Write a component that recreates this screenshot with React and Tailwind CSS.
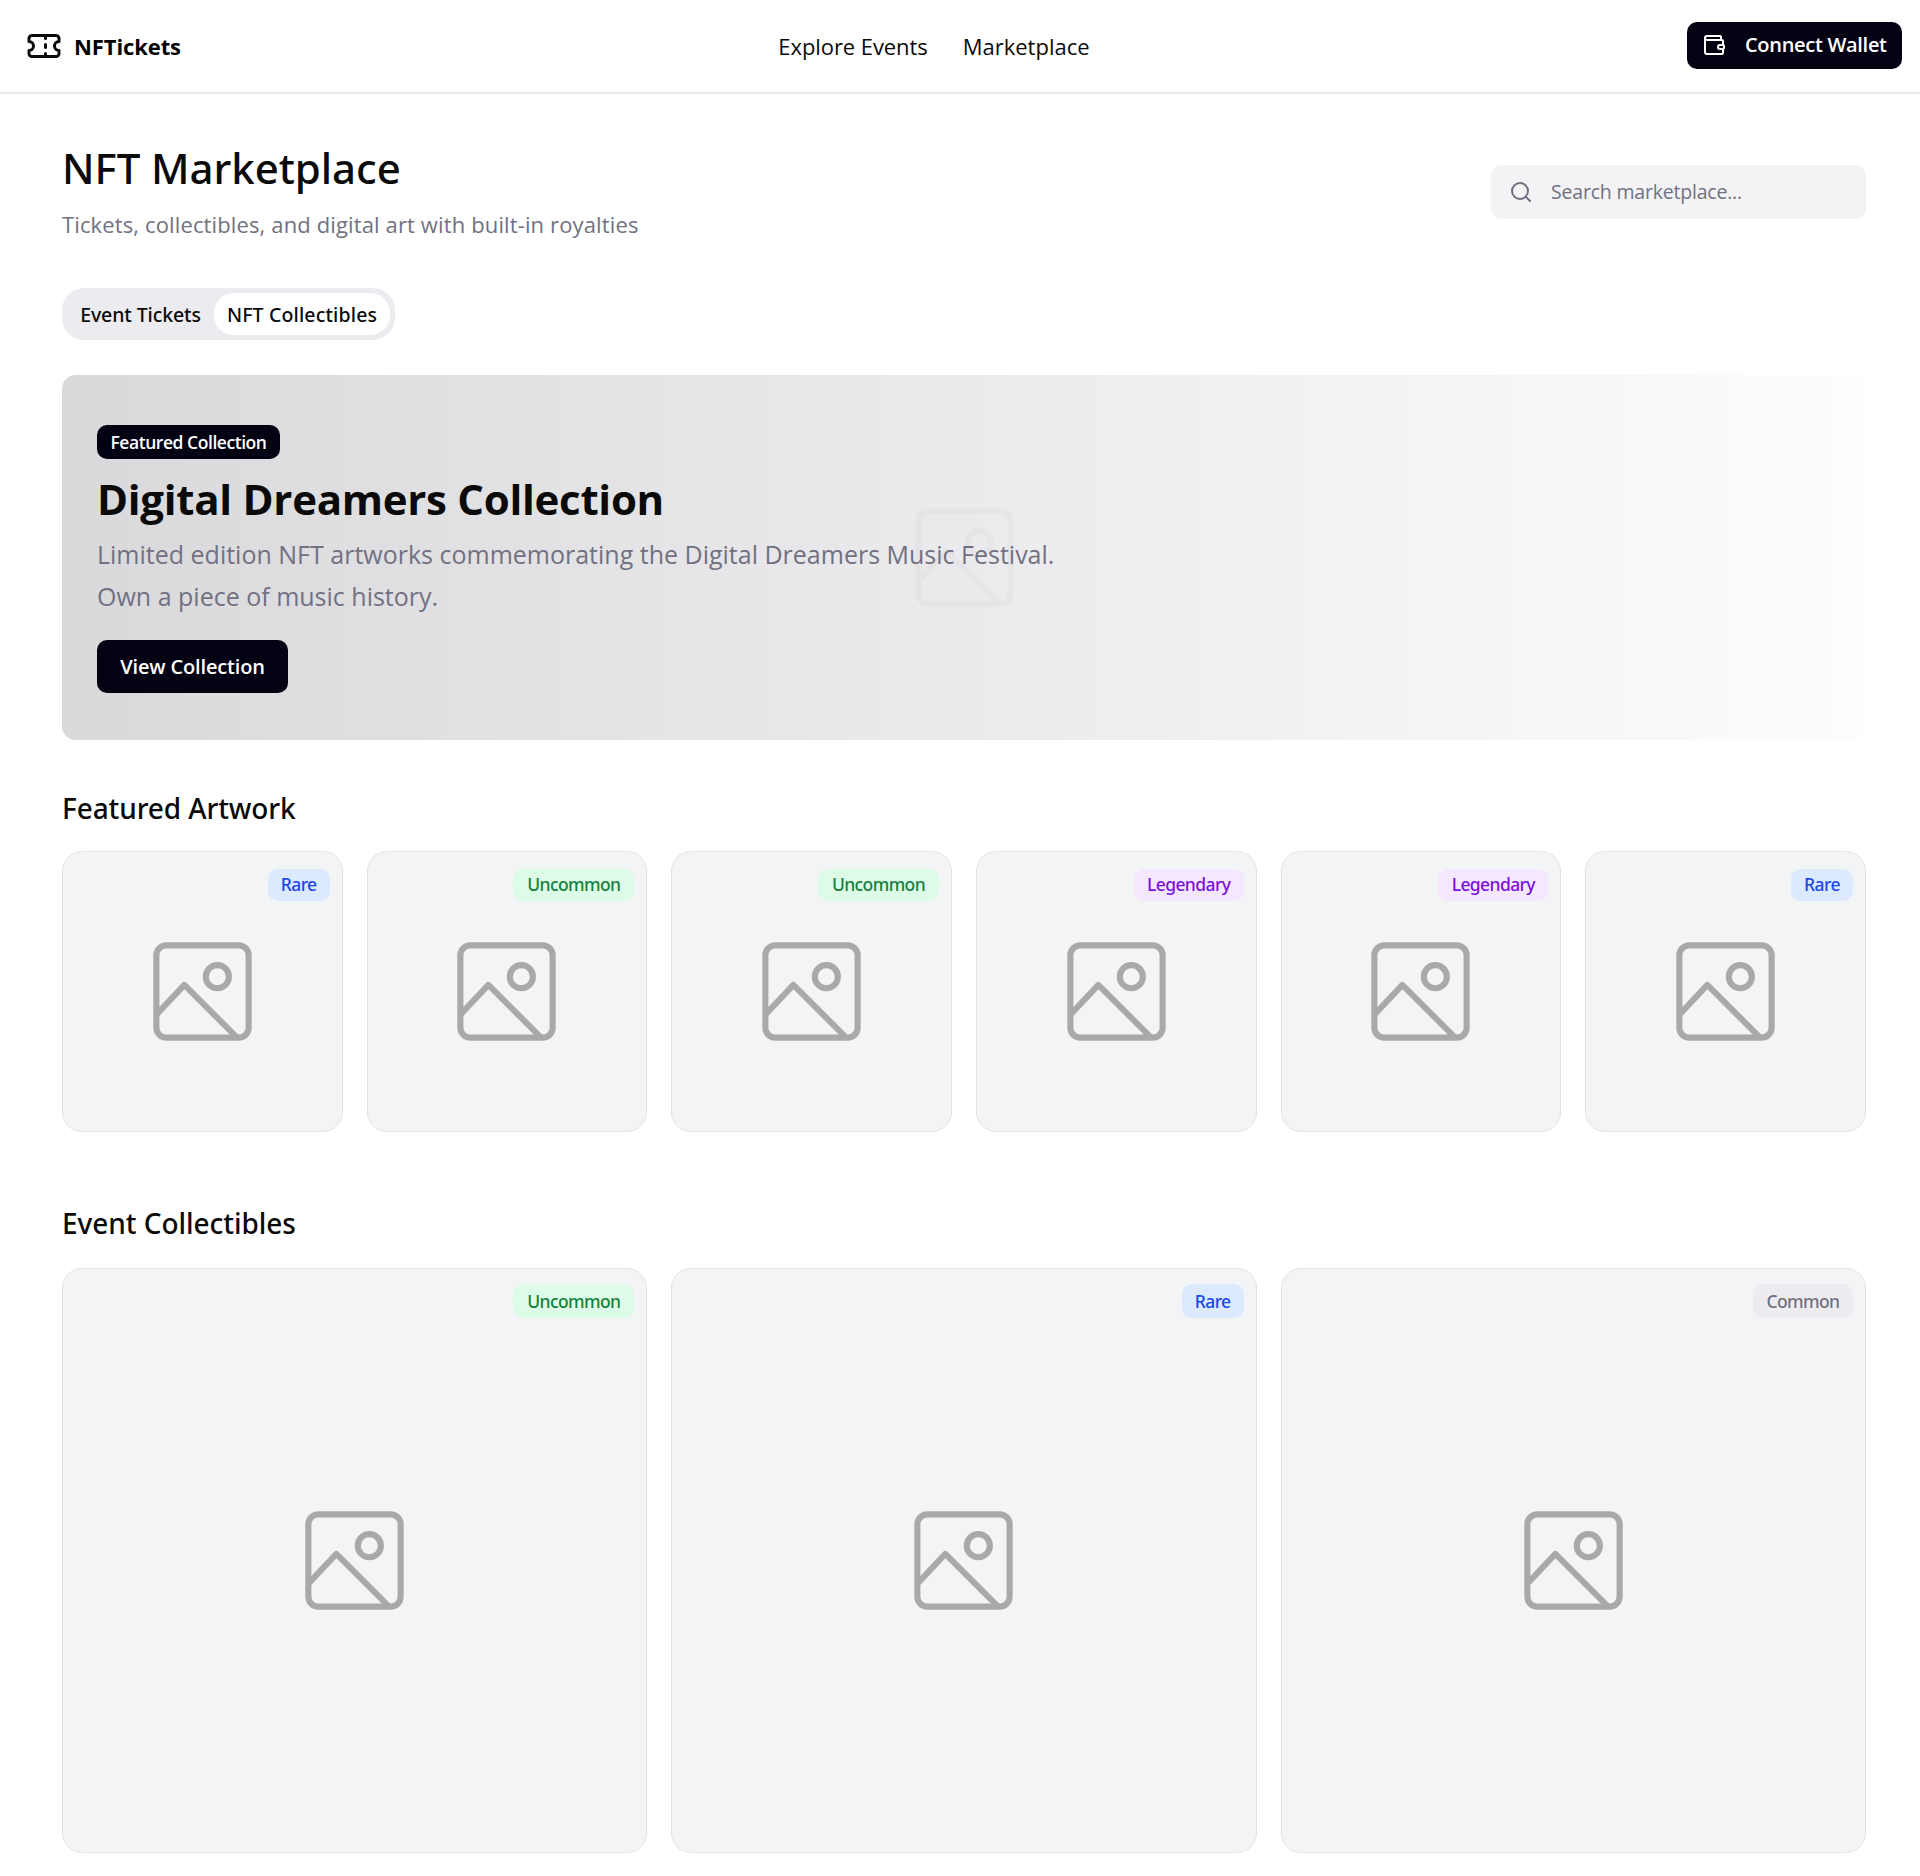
import { Search, Ticket, Wallet } from 'lucide-react';

const rarityStyles = {
  Rare: 'bg-[#dbeafe] text-[#1d46e8] w-[62px]',
  Uncommon: 'bg-[#dcfce7] text-[#17803d] w-[121px]',
  Legendary: 'bg-[#f3e8ff] text-[#7e0fdb] w-[110px]',
  Common: 'bg-[#ececf0] text-[#717182] w-[100px]',
};

const artworks = ['Rare', 'Uncommon', 'Uncommon', 'Legendary', 'Legendary', 'Rare'];
const collectibles = ['Uncommon', 'Rare', 'Common'];

function ImagePlaceholder({ className }) {
  return (
    <svg
      viewBox="0 0 88 88"
      className={`size-[145px] ${className}`}
      fill="none"
      stroke="#000"
      strokeWidth="3.7"
      strokeLinejoin="round"
    >
      <rect x="16" y="16" width="56" height="56" rx="6" />
      <path d="m16 58 17-18 32 32" />
      <circle cx="53" cy="35" r="7" />
    </svg>
  );
}

function Card({ rarity, large }) {
  return (
    <div
      className={`relative flex items-center justify-center rounded-[20px] border border-[#e2e3e5] bg-[#f3f4f6] ${large ? 'h-[585px]' : 'h-[281px]'}`}
    >
      <ImagePlaceholder className="opacity-30" />
      <span
        className={`absolute right-3 flex items-center justify-center rounded-[10px] font-['Noto_Sans',sans-serif] text-[17.5px] font-medium tracking-[-0.6px] ${large ? 'top-[15px] h-[34px]' : 'top-[17px] h-8 pb-px'} ${rarityStyles[rarity]}`}
      >
        {rarity}
      </span>
    </div>
  );
}

export default function App() {
  return (
    <div className="min-h-[1876px] bg-white font-['Open_Sans',sans-serif] text-[#0a0a0a]">
      <header className="flex h-[94px] items-center justify-between border-b-2 border-[#e7e7e8] pr-[18px] pl-[26px]">
        <div className="flex items-center gap-3">
          <Ticket className="size-9" strokeWidth={2} />
          <span className="text-[22px] leading-[30px] font-bold tracking-[-0.1px] text-black">NFTickets</span>
        </div>
        <nav className="flex gap-[35px] text-[22px] leading-[30px]">
          <a className="tracking-[-0.08px]">Explore Events</a>
          <a>Marketplace</a>
        </nav>
        <button className="mb-[2px] flex h-[47px] w-[215px] items-center gap-[19px] rounded-[10px] bg-[#030213] pl-[15px] text-white">
          <Wallet className="size-6" strokeWidth={2} />
          <span className="text-[20px] leading-7 font-semibold tracking-[-0.3px]">Connect Wallet</span>
        </button>
      </header>

      <main className="pt-[49px] pr-[54px] pl-[62px]">
        <div className="flex items-center justify-between">
          <div>
            <h1 className="font-['Noto_Sans',sans-serif] text-[42px] leading-[50px] font-medium tracking-[-0.05px]">
              NFT Marketplace
            </h1>
            <p className="mt-4 mb-px text-[22px] leading-[30px] tracking-[0.13px] text-[#717182]">
              Tickets, collectibles, and digital art with built-in royalties
            </p>
          </div>
          <div className="flex h-[54px] w-[375px] items-center gap-[18px] rounded-[10px] bg-[#f3f3f5] pl-[18px] text-[#717182]">
            <Search className="size-6" strokeWidth={2} />
            <span className="text-[19.5px] tracking-[-0.2px]">Search marketplace...</span>
          </div>
        </div>

        <div className="mt-12 flex h-[52px] w-[333px] items-center rounded-[22px] bg-[#ececf0] px-[5px] font-['Noto_Sans',sans-serif] text-[19.5px] font-medium">
          <span className="flex h-[42px] w-[147px] items-center justify-center pt-px tracking-[-0.1px]">
            Event Tickets
          </span>
          <span className="flex h-[42px] w-44 items-center justify-center rounded-[20px] bg-white pt-px tracking-[0.15px]">
            NFT Collectibles
          </span>
        </div>

        <section className="relative mt-[35px] h-[365px] overflow-hidden rounded-[14px] bg-linear-to-r from-[#d9d9dc] to-[#fdfdfe]">
          <div className="absolute inset-0 flex items-center justify-center">
            <ImagePlaceholder className="opacity-[0.018]" />
          </div>
          <div className="relative flex flex-col items-start pt-[50px] pl-[35px]">
            <span className="flex h-[34px] w-[183px] items-center justify-center rounded-[10px] bg-[#030213] text-[17.5px] font-semibold tracking-[-0.45px] text-white">
              Featured Collection
            </span>
            <h2 className="mt-[14px] text-[42px] leading-[52px] font-bold tracking-[-0.28px]">
              Digital Dreamers Collection
            </h2>
            <p className="mt-2 text-[25px] leading-[42px] text-[#717182]">
              Limited edition NFT artworks commemorating the Digital Dreamers Music Festival.
              <br />
              Own a piece of music history.
            </p>
            <button className="mt-[23px] flex h-[53px] w-[191px] items-center justify-center rounded-[10px] bg-[#030213] text-[20px] font-semibold tracking-[-0.15px] text-white">
              View Collection
            </button>
          </div>
        </section>

        <h3 className="mt-12 font-['Noto_Sans',sans-serif] text-[28px] leading-10 font-medium tracking-[-0.1px]">
          Featured Artwork
        </h3>
        <div className="mt-[23px] grid grid-cols-6 gap-6">
          {artworks.map((rarity, i) => (
            <Card key={i} rarity={rarity} />
          ))}
        </div>

        <h3 className="mt-[71px] font-['Noto_Sans',sans-serif] text-[28px] leading-10 font-medium tracking-[-0.05px]">
          Event Collectibles
        </h3>
        <div className="mt-[25px] grid grid-cols-3 gap-6">
          {collectibles.map((rarity, i) => (
            <Card key={i} rarity={rarity} large />
          ))}
        </div>
      </main>
    </div>
  );
}
